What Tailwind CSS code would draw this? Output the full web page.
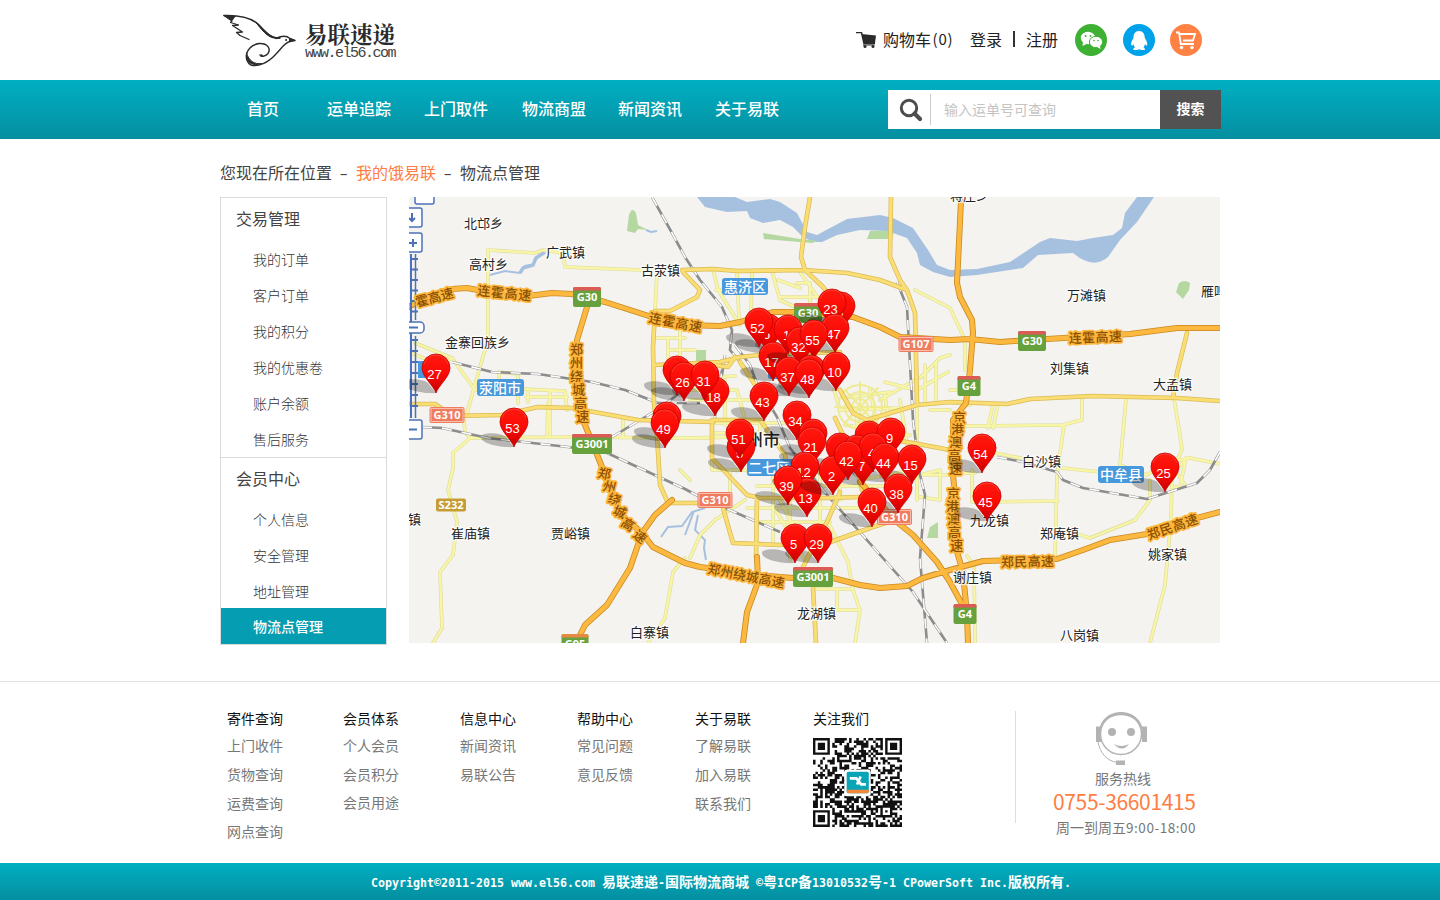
<!DOCTYPE html>
<html lang="zh-CN">
<head>
<meta charset="utf-8">
<title>易联速递 - 物流点管理</title>
<script src="https://cdn.jsdelivr.net/npm/@tailwindcss/browser@4"></script>
</head>
<body class="w-[1440px] h-[900px] overflow-hidden bg-white font-['Noto_Sans_CJK_SC',sans-serif] text-[#444] flex flex-col">

<header class="w-[1000px] h-20 mx-auto flex items-center shrink-0">
  <svg class="ml-[2px] w-[76px] h-[56px] shrink-0" viewBox="222 12 76 56" fill="none" stroke="#2b2b2b" stroke-linecap="round" stroke-linejoin="round">
    <path d="M224 15.500C238 15 250 17 258 24C266 32 270 39 280 38" stroke-width="1.500"/>
    <path d="M256 22.500C265 30 270 38.500 280 38C270 40 264 33 256 22.500Z" fill="#2b2b2b" stroke-width="1"/>
    <path d="M224 15.500L232 21L230.500 22.500L238.500 25L232.500 25.500L242.500 32L236.500 32.500L240 35.500L249 39.500" stroke-width="1.300"/>
    <path d="M223 15l13 1-4 5z" fill="#2b2b2b" stroke="none"/>
    <path d="M276 38.500C282 35.500 287 36 290 38.500L295 40.500L290 41.500C284 43 282 48 276 54C268 63 258 67 251 65C243 61 245 46 259 43.500C268 43 271 49 268 53.500C265 57 261 57 260 55" stroke-width="1.400"/>
    <path d="M246.500 53C245 62 252 67 262 63.500C254 64.500 249 61 246.500 53Z" fill="#2b2b2b" stroke-width="1"/>
    <path d="M289 38l6.500 2.500-6.500 1z" fill="#2b2b2b" stroke="none"/>
    <circle cx="286" cy="40" r=".5" fill="#2b2b2b"/><circle cx="261.500" cy="55.500" r="1.200" fill="#2b2b2b" stroke="none"/>
  </svg>
  <div class="ml-[7px] w-[96px]">
    <div class="text-[22.5px] leading-[26px] font-bold text-[#2b2b2b] whitespace-nowrap font-['Noto_Serif_CJK_SC','Noto_Sans_CJK_SC',serif]">易联速递</div>
    <div class="text-[15px] leading-[15px] text-[#444] whitespace-nowrap font-['Liberation_Mono',monospace] tracking-[-1.5px]">www.el56.com</div>
  </div>
  <svg class="ml-[455px] w-[20px] h-[16px] shrink-0" viewBox="0 0 20 16"><path d="M0 .5H5.500L8 11.500H19" fill="none" stroke="#2b2b2b" stroke-width="1.500"/><path d="M5.500 2L20 3.500L19 11H8z" fill="#2b2b2b"/><path d="M7 13H18.500" stroke="#2b2b2b"/><circle cx="9" cy="14.500" r="1.500" fill="#2b2b2b"/><circle cx="17" cy="14.500" r="1.500" fill="#2b2b2b"/></svg>
  <div class="ml-[7px] mb-[2px] flex text-[16px] leading-6 text-[#222] whitespace-nowrap">
    <span>购物车</span><span class="w-[24px] text-center tracking-[0.8px] text-[15px]">(0)</span>
    <span class="ml-[15px]">登录</span><span class="w-[24px] flex justify-center items-center"><i class="w-[1.5px] h-4 bg-[#333]"></i></span><span>注册</span>
  </div>
  <div class="ml-[17px] flex shrink-0">
    <svg class="w-8 h-8" viewBox="0 0 32 32"><circle cx="16" cy="16" r="16" fill="#3eb135"/><ellipse cx="13" cy="14" rx="7.200" ry="6.200" fill="#fff"/><path d="M8 18l-.5 4 4-2z" fill="#fff"/><ellipse cx="21" cy="18" rx="6.600" ry="5.700" fill="#fff" stroke="#3eb135"/><path d="M22 23l3.500 2-.5-3z" fill="#fff"/><g fill="#3eb135"><circle cx="10.600" cy="12" r="1"/><circle cx="15.500" cy="12" r="1"/><circle cx="19" cy="16.500" r=".8"/><circle cx="23" cy="16.500" r=".8"/></g></svg>
    <svg class="ml-4 w-8 h-8" viewBox="0 0 32 32"><circle cx="16" cy="16" r="16" fill="#00a3ea"/><path d="M16 7C12 7 10.500 10 10.500 14C8.500 17 7.500 20 8.500 21.500C9.300 22 10 20.500 10.500 20C10.700 21.500 11 22.500 12 23.500C9 25 10 26.500 12.500 26C14 26 15.500 25.500 16 25.200C17 25.700 18.500 26 20 26C22.500 26.500 23 25 20.500 23.500C21.500 22.500 21.500 21.500 22 20C22.500 21 23.500 22 24 21.500C25 20 23.500 16.500 21.800 14C21.800 10 20 7 16 7Z" fill="#fff"/></svg>
    <svg class="ml-[15px] w-8 h-8" viewBox="0 0 32 32"><circle cx="16" cy="16" r="16" fill="#ff8244"/><g fill="none" stroke="#fff" stroke-width="1.800"><path d="M6 8.500H9L10.800 20H24"/><path d="M10 10H25L23 16.500H13"/></g><circle cx="11.500" cy="23.500" r="1.700" fill="#fff"/><circle cx="22" cy="23.500" r="1.700" fill="#fff"/></svg>
  </div>
</header>

<nav class="h-[59px] shrink-0 bg-linear-to-b from-[#00afc2] to-[#048fa0]">
  <div class="w-[1001px] h-full ml-[220px] flex items-center text-white text-[16px] font-medium whitespace-nowrap">
    <div class="ml-[27px] mb-[3px] flex"><a class="w-[80px]">首页</a><a class="w-[97px]">运单追踪</a><a class="w-[98px]">上门取件</a><a class="w-[96px]">物流商盟</a><a class="w-[97px]">新闻资讯</a><a class="w-[173px]">关于易联</a></div>
    <div class="w-[333px] h-[39px] bg-white flex items-center shrink-0">
      <svg class="ml-[11px] w-6 h-6" viewBox="0 0 24 24" fill="none" stroke="#4d4d4d"><circle cx="10" cy="10" r="7.700" stroke-width="3"/><path d="M15.500 15.500L21 21" stroke-width="4.200" stroke-linecap="round"/></svg>
      <i class="ml-[7px] w-px h-[31px] bg-[#ccc]"></i>
      <span class="ml-[13px] flex-1 text-[14px] font-normal text-[#c4c4c4]">输入运单号可查询</span>
      <span class="w-[61px] h-full pb-[2px] bg-[#525252] text-[14px] font-bold flex items-center justify-center">搜索</span>
    </div>
  </div>
</nav>

<div class="ml-[220px] h-[58px] pt-[21px] shrink-0 text-[16px] leading-6 whitespace-nowrap flex">
  <span>您现在所在位置</span><span class="w-6 flex justify-center"><span class="scale-x-150">-</span></span><span class="text-[#ff7d41]">我的饿易联</span><span class="w-6 flex justify-center"><span class="scale-x-150">-</span></span><span>物流点管理</span>
</div>

<main class="ml-[220px] flex h-[448px] shrink-0">
  <aside class="w-[167px] h-[448px] border border-[#d9dcdc] text-[14px] font-light text-[#333] shrink-0">
    <h3 class="h-[43px] pl-[15px] leading-[41px] text-[16px] font-normal text-[#444]">交易管理</h3>
    <ul class="pl-8 leading-9 h-[216px]"><li>我的订单</li><li>客户订单</li><li>我的积分</li><li>我的优惠卷</li><li>账户余额</li><li>售后服务</li></ul>
    <h3 class="h-[44px] border-t border-[#d9dcdc] pl-[15px] leading-[41px] text-[16px] font-normal text-[#444]">会员中心</h3>
    <ul class="leading-9"><li class="pl-8">个人信息</li><li class="pl-8">安全管理</li><li class="pl-8 h-[35px]">地址管理</li><li class="pl-8 h-9 bg-[#049db1] text-white font-medium">物流点管理</li></ul>
  </aside>

  <svg class="ml-[22px] w-[811px] h-[446px] shrink-0" viewBox="409 197 811 446">
    <defs>
      <linearGradient id="red" x1="0" y1="0" x2="0" y2="1"><stop offset="0" stop-color="#ff1a10"/><stop offset=".5" stop-color="#fb0a04"/><stop offset="1" stop-color="#c80000"/></linearGradient>
      <path id="shade" d="M0 0C-12 1-33-3-33-10C-33-15-14-15-8-10Z" fill="#000" fill-opacity=".25"/>
      <g id="pin"><path d="M0 0C-2-7-14-16-14-25A14 14 0 0 1 14-25C14-16 2-7 0 0Z" fill="url(#red)" stroke="#c40000" stroke-width=".8"/><path d="M-12-29A12.500 12.500 0 0 1 12-29" fill="none" stroke="#ff6a5a" stroke-opacity=".45" stroke-width="1"/></g>
      <path id="minor" d="M488 250L535 253L543 250L563 253L565 267L642 270M488 250V340L482 360L467 413M415 343L452 358L475 390L499 392M409 352L440 365L452 358M499 393V372L518 374V403M499 388L565 391L567 410M550 391V435M528 389V402M526 397H567M548 403L547 437M463 413L465 432L470 438L572 437L685 438L740 437M470 438L453 453L453 468L448 490L457 522L453 555L440 572L442 628L433 643M685 558L673 572L665 618L648 643M623 417V438M657 272L655 310M655 338H685M655 365H712M680 320V372M668 338V380M670 350H695M713 269L718 290L740 325M737 271L739 320M752 271L751 315M716 290H737M772 271L780 300L797 308M780 297H823M800 272L823 305M797 283H810V305M778 280L800 288M915 290L950 308L965 340M685 390H737L745 420M690 400H755M725 380V425M700 378L735 376M680 438H712M712 448V470H745M714 423H800M714 433H770M740 423V448M760 423V445M748 472H840M757 486H900M730 492V472M773 473V545M790 480V560M820 472V530M840 485V500M747 508H860M757 522H830M700 503L720 502M745 500L715 520L700 535L690 558M773 505L805 560M827 520L848 562L853 590L860 610L855 643M815 589H853M837 589V610M837 610H858M780 500L800 540M690 480L680 470M834 390L840 410L900 408M843 398L890 392M920 378L940 358L950 355M917 390L948 372M885 382L915 390M880 400L915 380M925 365V402M936 362V400M845 425L910 435M855 410L860 440M870 390L880 440M885 395L890 440M900 400L908 450M917 403V500M920 475L940 470V500L920 497M940 475H960M860 480L912 470M930 410H950M913 475H940M965 342V370M950 390H970M950 402L970 405M993 404L988 428M998 404L993 428M1082 398L1082 420L1063 425L965 426M1064 425L1057 475L1055 560M1126 399L1120 465L1147 475L1165 463L1190 458L1220 464M1062 468L1100 472M995 453L1030 460M972 470V502L1058 501M965 473H975M1174 399L1180 435L1182 450L1172 470L1171 520L1165 585L1150 643M1186 458L1180 487H1172M1150 480V500L1135 520L1090 538L1080 535M967 556L974 565L975 643M1185 461L1175 470L1185 485"/>
      <path id="medium" d="M810 197L805 227L801 257L805 270L823 287L835 303M682 270L713 269L737 271L803 270L847 273L880 280L907 290L915 313L917 403M891 197L890 257L900 280L907 290M683 272L700 290L697 297L670 311H655L653 347L654 403L657 435L660 485L668 503L700 503M409 404H435L452 416L502 415L538 407L572 408L638 420L713 422M654 365L720 362L740 357L760 355M713 365L728 367L735 357M740 362L765 400M760 355L840 352M840 390L853 413L867 420L917 405L950 402L1007 404L1030 399L1093 396L1177 398L1220 401M1187 333L1177 373L1173 398M860 435L913 443L950 450M712 425V458L747 495L760 498L827 498L860 497M757 498L756 557M723 508L733 543L780 545L813 541M803 567L813 548L873 527L895 520M813 588L816 643M840 492L827 522L807 558M835 418L855 460L862 490M760 420L785 455L790 490M712 420H760"/>
      <path id="major" d="M409 307L417 302L452 289L467 288L505 295L528 296L552 293L572 294L605 302L652 317L685 325L720 326L740 322L773 312L797 312L827 315L853 317L880 327L900 337L950 340L970 339L1000 342L1047 339L1130 334L1177 328H1220M587 307L577 340L575 377L583 420L598 457L612 492L622 515L642 533L653 547L685 563L700 567L757 575L793 578H833L860 585L880 588L907 586L923 578L950 570L983 561L1057 559L1083 550L1110 540L1147 534L1197 518L1220 512M672 500L655 515L642 533L630 568L607 605L585 625L576 643M961 201L957 283L960 297L972 320L973 333L970 370L966 403L953 420V475L955 495V545L963 572L967 615L968 643M757 557L758 582L747 612L743 643M860 482L897 522L913 535L937 562L950 582L963 606"/>
      <path id="rail" d="M652 197L672 233L685 257L700 280L722 307L732 330L730 350L753 377L777 417L790 448L827 495L913 592L947 643M452 362L492 372L538 374L592 382L625 390L658 403H700M422 427L442 428L488 438L568 447L605 452L685 489L700 497L780 532M612 437L660 408L690 385M897 282L907 307L913 420L920 475L925 495L920 558L927 643M997 457L1023 462L1057 472L1063 480L1083 488L1147 499L1197 483L1210 470L1220 452M725 355L722 375M735 345L750 365L760 392M840 538L880 525M714 423L722 370"/>
    </defs>
    <rect x="409" y="197" width="811" height="446" fill="#f4f3f0"/>
    <path fill="#a6c1df" d="M697 197L705 207L727 212L747 211L750 218L763 223L780 220L793 227L803 237L813 242H822L837 235L860 230L887 231L907 238L917 253L920 265L933 272L950 277L977 275L1023 268L1038 255L1073 253Q1093 270 1108 257L1120 240L1137 222L1154 197H1137L1125 213L1122 228L1113 235L1093 238L1077 241L1050 238L1040 242L1010 262L977 269L950 270L937 265L928 250L913 228L893 218L880 215L847 219L830 228L817 235L807 232L797 213L780 202L770 199L747 202L735 197Z"/>
    <path fill="#b5d8a0" d="M629 215Q632 206 636 213L638 225L648 230L638 229L635 233L627 231ZM763 233L800 239L818 241L812 243L764 239ZM870 231H893L892 239H867ZM1179 283Q1185 279 1190 283L1189 290L1183 299L1176 292ZM930 527L938 522V538H927ZM696 350H706V361H696Z"/>
    <g fill="none" stroke="#a6c1df" stroke-width="2"><path d="M646 230L651 232L657 231M490 275L505 271L520 273L525 266L530 265"/><path d="M520 273L523 268L533 265L536 258L545 252" stroke-width="3.500"/><path d="M661 537L668 527L682 526L692 512L705 508M698 515L695 530L705 540L704 548L706 560M694 511L685 535"/></g>
    <g fill="none" stroke-linejoin="round" stroke-linecap="round">
      <use href="#minor" stroke="#dddc9a" stroke-width="3.600"/><use href="#minor" stroke="#f8f6a6" stroke-width="2.400"/>
      <g stroke="#eeeb92" stroke-width="2"><circle cx="860" cy="407" r="8"/><circle cx="860" cy="407" r="15"/><circle cx="860" cy="407" r="22"/><path d="M845 390L878 426M878 388L844 424M860 382V430M835 407H890"/></g>
      <use href="#rail" stroke="#8c8c8c" stroke-width="2.600" stroke-linecap="butt"/><use href="#rail" stroke="#fff" stroke-width="1.600" stroke-dasharray="10 10" stroke-linecap="butt"/>
      <use href="#medium" stroke="#d9ba55" stroke-width="4.600"/><use href="#medium" stroke="#fade73" stroke-width="3.200"/>
      <use href="#major" stroke="#c78a20" stroke-width="6"/><use href="#major" stroke="#fdb840" stroke-width="4.400"/>
    </g>
    <g fill="none" stroke="#4b72b8" stroke-width="1.500"><path d="M415.500 254V320M415.500 336V418" stroke-width="1.500"/><path d="M410 259H418M410 269.500H418M410 280H418M410 290.500H418M410 301H418M410 311.500H418M410 340H418M410 351H418M410 362H418M410 373H418M410 384H418M410 395H418M410 406H418M411 254V418" stroke-width="2"/><g fill="#fff"><rect x="415" y="190" width="19" height="14" rx="2"/><rect x="402" y="208" width="20" height="19" rx="2"/><rect x="402" y="233" width="20" height="19" rx="2"/><rect x="402" y="322" width="22" height="11" rx="4"/><rect x="402" y="420" width="20" height="19" rx="2"/></g><path d="M412 213V221M409 218L412 221L415 218M409 243H417M413 239V247M409 327.500H418M409 429.500H417" stroke-width="2"/></g>

    <g font-family="Noto Sans CJK SC, sans-serif" font-size="13" fill="#8a4f00" font-weight="500" stroke="#fdb63d" stroke-width="3.500" paint-order="stroke" stroke-linejoin="round">
      <text transform="translate(417 307) rotate(-15)">霍高速</text>
      <text transform="translate(477 295) rotate(6)" textLength="54">连霍高速</text>
      <text transform="translate(648 322) rotate(11)" textLength="54">连霍高速</text>
      <text transform="translate(1069 343) rotate(-2)" textLength="53">连霍高速</text>
      <text x="570 570 570 572 574 576" y="354 367 381 394 408 421">郑州绕城高速</text>
      <text x="597 602 607 612 620 632" y="477 490 502 514 525 536" rotate="12 14 16 22 32 40">郑州绕城高速</text>
      <text transform="translate(707 573) rotate(11)" textLength="78">郑州绕城高速</text>
      <text x="953 951 949 948 949" y="422 434 447 460 473">京港澳高速</text>
      <text x="947 946 947 948 950" y="498 511 524 537 550">京港澳高速</text>
      <text transform="translate(1001 567) rotate(-1)" textLength="53">郑民高速</text>
      <text transform="translate(1149 540) rotate(-19)" textLength="53">郑民高速</text>
    </g>
    <g font-family="Noto Sans CJK SC, sans-serif" font-size="13" fill="#222" stroke="#fff" stroke-opacity=".8" stroke-width="2.500" paint-order="stroke" stroke-linejoin="round">
      <text x="464" y="228">北邙乡</text><text x="546" y="257">广武镇</text><text x="469" y="269">高村乡</text><text x="641" y="275">古荥镇</text><text x="445" y="347">金寨回族乡</text><text x="950" y="200">蒋庄乡</text><text x="1067" y="300">万滩镇</text><text x="1201" y="296">雁鸣</text><text x="1050" y="373">刘集镇</text><text x="1153" y="389">大孟镇</text><text x="408" y="524">镇</text><text x="451" y="538">崔庙镇</text><text x="551" y="538">贾峪镇</text><text x="630" y="637">白寨镇</text><text x="797" y="618">龙湖镇</text><text x="1022" y="466">白沙镇</text><text x="970" y="525">九龙镇</text><text x="1040" y="538">郑庵镇</text><text x="1148" y="559">姚家镇</text><text x="953" y="582">谢庄镇</text><text x="1060" y="640">八岗镇</text>
      <text x="729" y="446" font-size="17" font-weight="500">郑州市</text>
    </g>
    <g fill="#4798dd"><rect x="722" y="278" width="46" height="17" rx="3"/><rect x="477" y="379" width="47" height="17" rx="3"/><rect x="747" y="459" width="50" height="17" rx="3"/><rect x="1098" y="466" width="46" height="17" rx="3"/><rect x="418" y="361" width="7" height="17"/><rect x="768" y="362" width="46" height="17" rx="3"/></g>
    <g font-family="Noto Sans CJK SC, sans-serif" font-size="14" fill="#fff" font-weight="500"><text x="724" y="292">惠济区</text><text x="479" y="393">荥阳市</text><text x="748" y="473">二七区</text><text x="1100" y="480">中牟县</text></g>
    <g id="shields" font-family="Noto Sans, sans-serif" font-size="11" font-weight="bold" fill="#fff" text-anchor="middle"></g>
    <g id="pins" font-family="Liberation Sans, Arial, sans-serif" font-size="13" fill="#fff" text-anchor="middle"></g>
  </svg>
</main>

<footer class="mt-[36px] h-[182px] shrink-0 border-t border-[#e2e2e2]">
  <div class="ml-[227px] pt-[26px] flex text-[14px] leading-5 text-[#777] whitespace-nowrap">
    <dl class="w-[116px]"><dt class="text-[#111]">寄件查询</dt><dd class="mt-[7px]">上门收件</dd><dd class="mt-[9px]">货物查询</dd><dd class="mt-[9px]">运费查询</dd><dd class="mt-[8px]">网点查询</dd></dl>
    <dl class="w-[117px]"><dt class="text-[#111]">会员体系</dt><dd class="mt-[7px]">个人会员</dd><dd class="mt-[9px]">会员积分</dd><dd class="mt-[8px]">会员用途</dd></dl>
    <dl class="w-[117px]"><dt class="text-[#111]">信息中心</dt><dd class="mt-[7px]">新闻资讯</dd><dd class="mt-[9px]">易联公告</dd></dl>
    <dl class="w-[118px]"><dt class="text-[#111]">帮助中心</dt><dd class="mt-[7px]">常见问题</dd><dd class="mt-[9px]">意见反馈</dd></dl>
    <dl class="w-[118px]"><dt class="text-[#111]">关于易联</dt><dd class="mt-[7px]">了解易联</dd><dd class="mt-[9px]">加入易联</dd><dd class="mt-[9px]">联系我们</dd></dl>
    <div class="w-[202px]"><div class="text-[#111]">关注我们</div>
      <svg class="mt-[10px] w-[89px] h-[89px]" viewBox="0 0 37 37"><path id="qr" fill="#111"/><rect x="13" y="13.200" width="11" height="11" rx="1" fill="#fff"/><rect x="14" y="14" width="9.200" height="9" rx=".8" fill="#09a5b7"/><path d="M14 21.500H23.200V22.200Q23 23 22 23H15Q14 23 14 22Z" fill="#f5873c"/><path d="M15.300 16.800H18L20 19.300H22M19.800 16L18.300 19.300" fill="none" stroke="#fff" stroke-width="1.100"/></svg>
    </div>
    <i class="mt-[3px] w-px h-[112px] bg-[#ddd]"></i>
    <div class="ml-[37px] w-[143px] flex flex-col items-start">
      <svg class="ml-[42px] mt-[3px] w-[53px] h-[55px]" viewBox="0 0 53 55"><circle cx="26" cy="23" r="20.500" fill="none" stroke="#b3b3b3" stroke-width="1.500"/><path d="M5 18C8-4 44-4 47 18C41-1 11-1 5 18Z" fill="#b3b3b3" stroke="#b3b3b3"/><path d="M1 15.500H6V31H1ZM47 15.500H52V31H47ZM21 49.500H30V54H21Z" fill="#b3b3b3"/><path d="M3 31C5 42 12 50 22 51.500" fill="none" stroke="#b3b3b3"/><circle cx="17" cy="21" r="4" fill="#b3b3b3"/><circle cx="36" cy="21" r="4" fill="#b3b3b3"/><path d="M19 33Q26 37 34 33Q27 42 19 33Z" fill="#b3b3b3"/></svg>
      <div class="ml-[42px] mt-[2px]">服务热线</div>
      <div class="mt-[2px] text-[21px] leading-[23px] tracking-[-0.35px] text-[#ff7d41]">0755-36601415</div>
      <div class="ml-[3px] mt-[4px] w-[141px] flex"><span>周一到周五</span><span class="text-[13.5px] tracking-[0.55px]">9:00-18:00</span></div>
    </div>
  </div>
</footer>
<div class="h-[37px] pt-[2px] pl-[2px] shrink-0 bg-linear-to-b from-[#00afc2] to-[#048fa0] text-white font-bold text-[14px] flex justify-center items-center whitespace-pre leading-5"><p class="font-['DejaVu_Sans_Mono','Noto_Sans_CJK_SC',monospace] flex items-baseline *:odd:text-[11.6px] *:odd:tracking-[0.016px]"><span>Copyright©2011-2015 www.el56.com </span><span>易联速递</span><span>-</span><span>国际物流商城</span><span> ©</span><span>粤</span><span>ICP</span><span>备</span><span>13010532</span><span>号</span><span>-1 CPowerSoft Inc.</span><span>版权所有</span><span>.</span></p></div>

<script>
// Logistics points: tip x, tip y, number; later entries lie on top.
const points = [[436,393,27],[514,447,53],[677,395,'2'],[684,401,26],[715,416,18],[705,400,31],[667,441,''],[665,448,49],
[841,331,'5'],[832,328,23],[768,353,'6'],[759,347,52],[773,381,17],[788,354,'1'],[800,366,32],[835,353,47],[814,359,55],[811,394,''],[789,396,37],[809,398,48],[836,391,10],
[764,421,43],[797,440,34],[741,472,'5'],[740,458,51],[813,458,''],[812,466,21],[805,491,12],[807,517,13],[788,505,39],[869,460,''],[891,457,9],[840,472,'1'],[857,474,''],[833,495,2],[863,485,'7'],[873,472,'4'],[848,480,42],[885,482,44],[912,484,15],[898,513,38],[872,527,40],[795,563,5],[818,563,29],[982,473,54],[987,521,45],[1165,492,25]];
// Points whose shadow falls over a neighbouring marker
const shaded = [2, 7, 21, 17, 32];
// Road shields: centre x, centre y, width, text, body colour, cap colour
const signs = [[587,297,28,'G30','#67a13e','#dc5b55'],[808,313,28,'G30','#67a13e','#dc5b55'],[1032,341,28,'G30','#67a13e','#dc5b55'],[969,386,23,'G4','#67a13e','#dc5b55'],[965,614,23,'G4','#67a13e','#dc5b55'],[592,444,40,'G3001','#67a13e','#dc5b55'],[813,577,40,'G3001','#67a13e','#dc5b55'],[575,644,27,'G95','#67a13e','#e58a45'],
[916,344,35,'G107','#f07c60',''],[447,415,35,'G310','#f07c60',''],[715,500,35,'G310','#f07c60',''],[894.5,517,35,'G310','#f07c60',''],[451,505,30,'S232','#c69c34','']];
document.getElementById('shields').innerHTML = signs.map(([x,y,w,t,c,cap]) => {
  const h = cap ? 20 : t === 'S232' ? 13 : 16;
  return `<rect x="${x-w/2}" y="${y-h/2}" width="${w}" height="${h}" rx="2" fill="${c}"/>` +
    (cap ? `<path d="M${x-w/2} ${y-6.5}v-1.500q0-2 2-2h${w-4}q2 0 2 2v1.500z" fill="${cap}"/>` : t[0] === 'G' ? `<rect x="${x-w/2+1.5}" y="${y-h/2+1.5}" width="${w-3}" height="${h-3}" fill="none" stroke="#fbd0c2" stroke-width=".8"/>` : '') +
    `<text x="${x}" y="${y+4}">${t}</text>`;
}).join('');
document.getElementById('pins').innerHTML =
  points.filter(p => !shaded.includes(p[2])).map(([x,y]) => `<use href="#shade" x="${x}" y="${y}"/>`).join('') +
  points.map(([x,y,n]) => (shaded.includes(n) ? `<use href="#shade" x="${x}" y="${y}"/>` : '') + `<use href="#pin" x="${x}" y="${y}"/><text x="${x-1.5}" y="${y-14}">${n}</text>`).join('');
// QR modules
let d = '', s = 20117;
const finder = (x, y) => `M${x} ${y}h7v7h-7zM${x+1} ${y+1}v5h5v-5zM${x+2} ${y+2}h3v3h-3z`;
for (let y = 0; y < 37; y++) for (let x = 0; x < 37; x++) {
  s = (s * 1103515245 + 12345) % 2147483648;
  if ((x < 8 && (y < 8 || y > 28)) || (x > 28 && y < 8)) continue;
  if (x > 27 && x < 33 && y > 27 && y < 33) { if (x === 28 || x === 32 || y === 28 || y === 32 || (x === 30 && y === 30)) d += `M${x} ${y}h1v1h-1z`; continue; }
  if ((s >> 12) % 100 < 52) d += `M${x} ${y}h1.05v1.05h-1.05z`;
}
document.getElementById('qr').setAttribute('d', d + finder(0,0) + finder(30,0) + finder(0,30));
</script>
</body>
</html>
